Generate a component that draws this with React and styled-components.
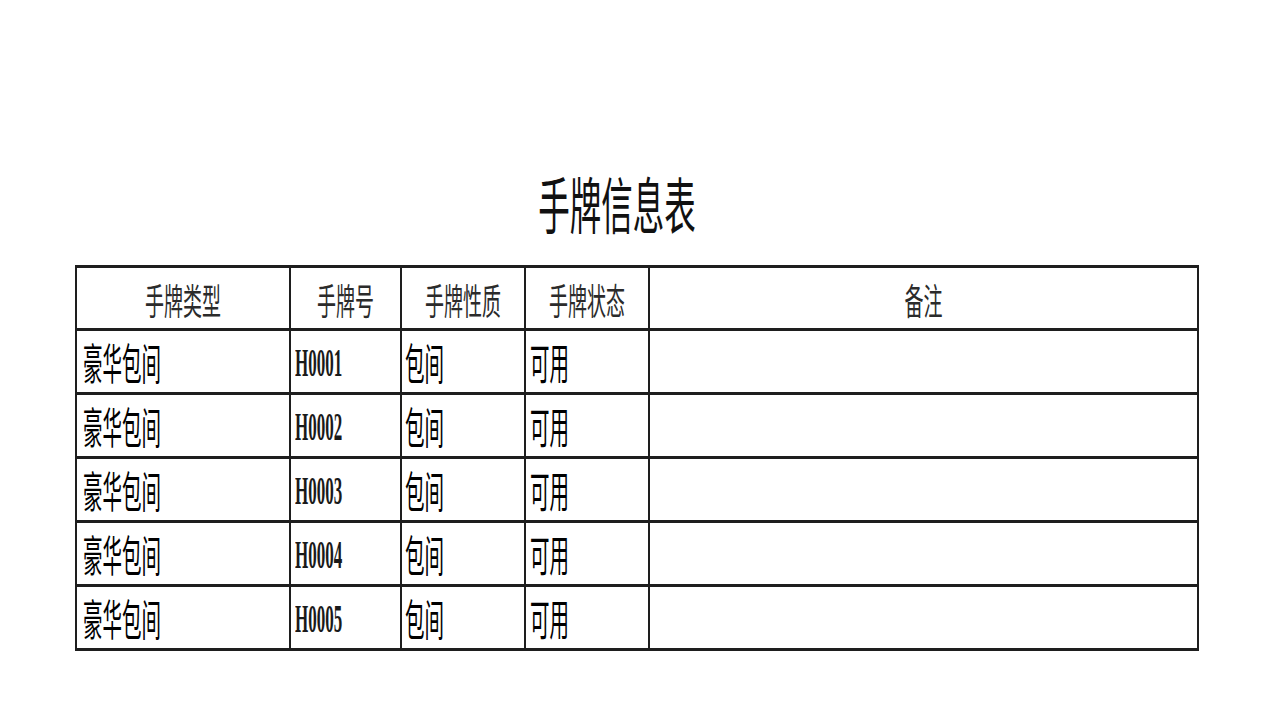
import React from "react";
import styled, { createGlobalStyle } from "styled-components";

const Global = createGlobalStyle`
  html, body { margin: 0; padding: 0; background: #ffffff; }
  body { font-family: "Noto Sans CJK SC", "Noto Sans", sans-serif; color: #111; }
`;

const Page = styled.div`
  width: 1124px;
  padding: 172px 0 0 75px;
`;

const Title = styled.h1`
  margin: 0 0 33px 0;
  height: 60px;
  line-height: 60px;
  padding-right: 40px;
  text-align: center;
  font-size: 31.5px;
  font-weight: 400;
  color: #111;
  font-family: "Noto Sans CJK SC", sans-serif;
`;

const Stretch = styled.span`
  display: inline-block;
  transform: scaleY(${(p) => p.$sy});
  transform-origin: center center;
`;

const Table = styled.table`
  width: 1124px;
  table-layout: fixed;
  border-collapse: separate;
  border-spacing: 0;
  border-top: 3px solid #1e1e1e;
  border-left: 2px solid #1e1e1e;
`;

const Cell = styled.td`
  box-sizing: border-box;
  height: ${(p) => (p.$head ? "63px" : "64px")};
  padding: 0 0 0 ${(p) => (p.$head ? "0" : `${p.$pad ?? 4}px`)};
  border-right: 2px solid #1e1e1e;
  border-bottom: 3px solid #1e1e1e;
  text-align: ${(p) => (p.$head ? "center" : "left")};
  vertical-align: middle;
  white-space: nowrap;
  overflow: hidden;
`;

const HeadText = styled(Stretch)`
  font-size: 19px;
  font-weight: 400;
  color: #2b2b2b;
  font-family: "Noto Sans CJK SC", sans-serif;
`;

const CjkText = styled(Stretch)`
  font-size: 19.5px;
  font-weight: 400;
  color: #000;
  font-family: "Noto Sans CJK SC", sans-serif;
`;

const CodeText = styled(Stretch)`
  font-size: 17px;
  font-weight: 700;
  color: #1a1a1a;
  font-family: "Liberation Serif", serif;
`;

const cols = [214, 111, 124, 124, 549];
const headers = ["手牌类型", "手牌号", "手牌性质", "手牌状态", "备注"];
const rows = [1, 2, 3, 4, 5].map((n) => ({
  type: "豪华包间",
  code: `H000${n}`,
  nature: "包间",
  status: "可用",
  note: "",
}));

export default function App() {
  return (
    <>
      <Global />
      <Page>
        <Title>
          <Stretch $sy={1.95}>手牌信息表</Stretch>
        </Title>
        <Table>
          <colgroup>
            {cols.map((w, i) => (
              <col key={i} style={{ width: w }} />
            ))}
          </colgroup>
          <thead>
            <tr>
              {headers.map((h) => (
                <Cell as="th" $head key={h}>
                  <HeadText $sy={1.9}>{h}</HeadText>
                </Cell>
              ))}
            </tr>
          </thead>
          <tbody>
            {rows.map((r) => (
              <tr key={r.code}>
                <Cell $pad={6}>
                  <CjkText $sy={2.2}>{r.type}</CjkText>
                </Cell>
                <Cell $pad={4}>
                  <CodeText $sy={2.4}>{r.code}</CodeText>
                </Cell>
                <Cell $pad={3}>
                  <CjkText $sy={2.2}>{r.nature}</CjkText>
                </Cell>
                <Cell $pad={4}>
                  <CjkText $sy={2.2}>{r.status}</CjkText>
                </Cell>
                <Cell>{r.note}</Cell>
              </tr>
            ))}
          </tbody>
        </Table>
      </Page>
    </>
  );
}
